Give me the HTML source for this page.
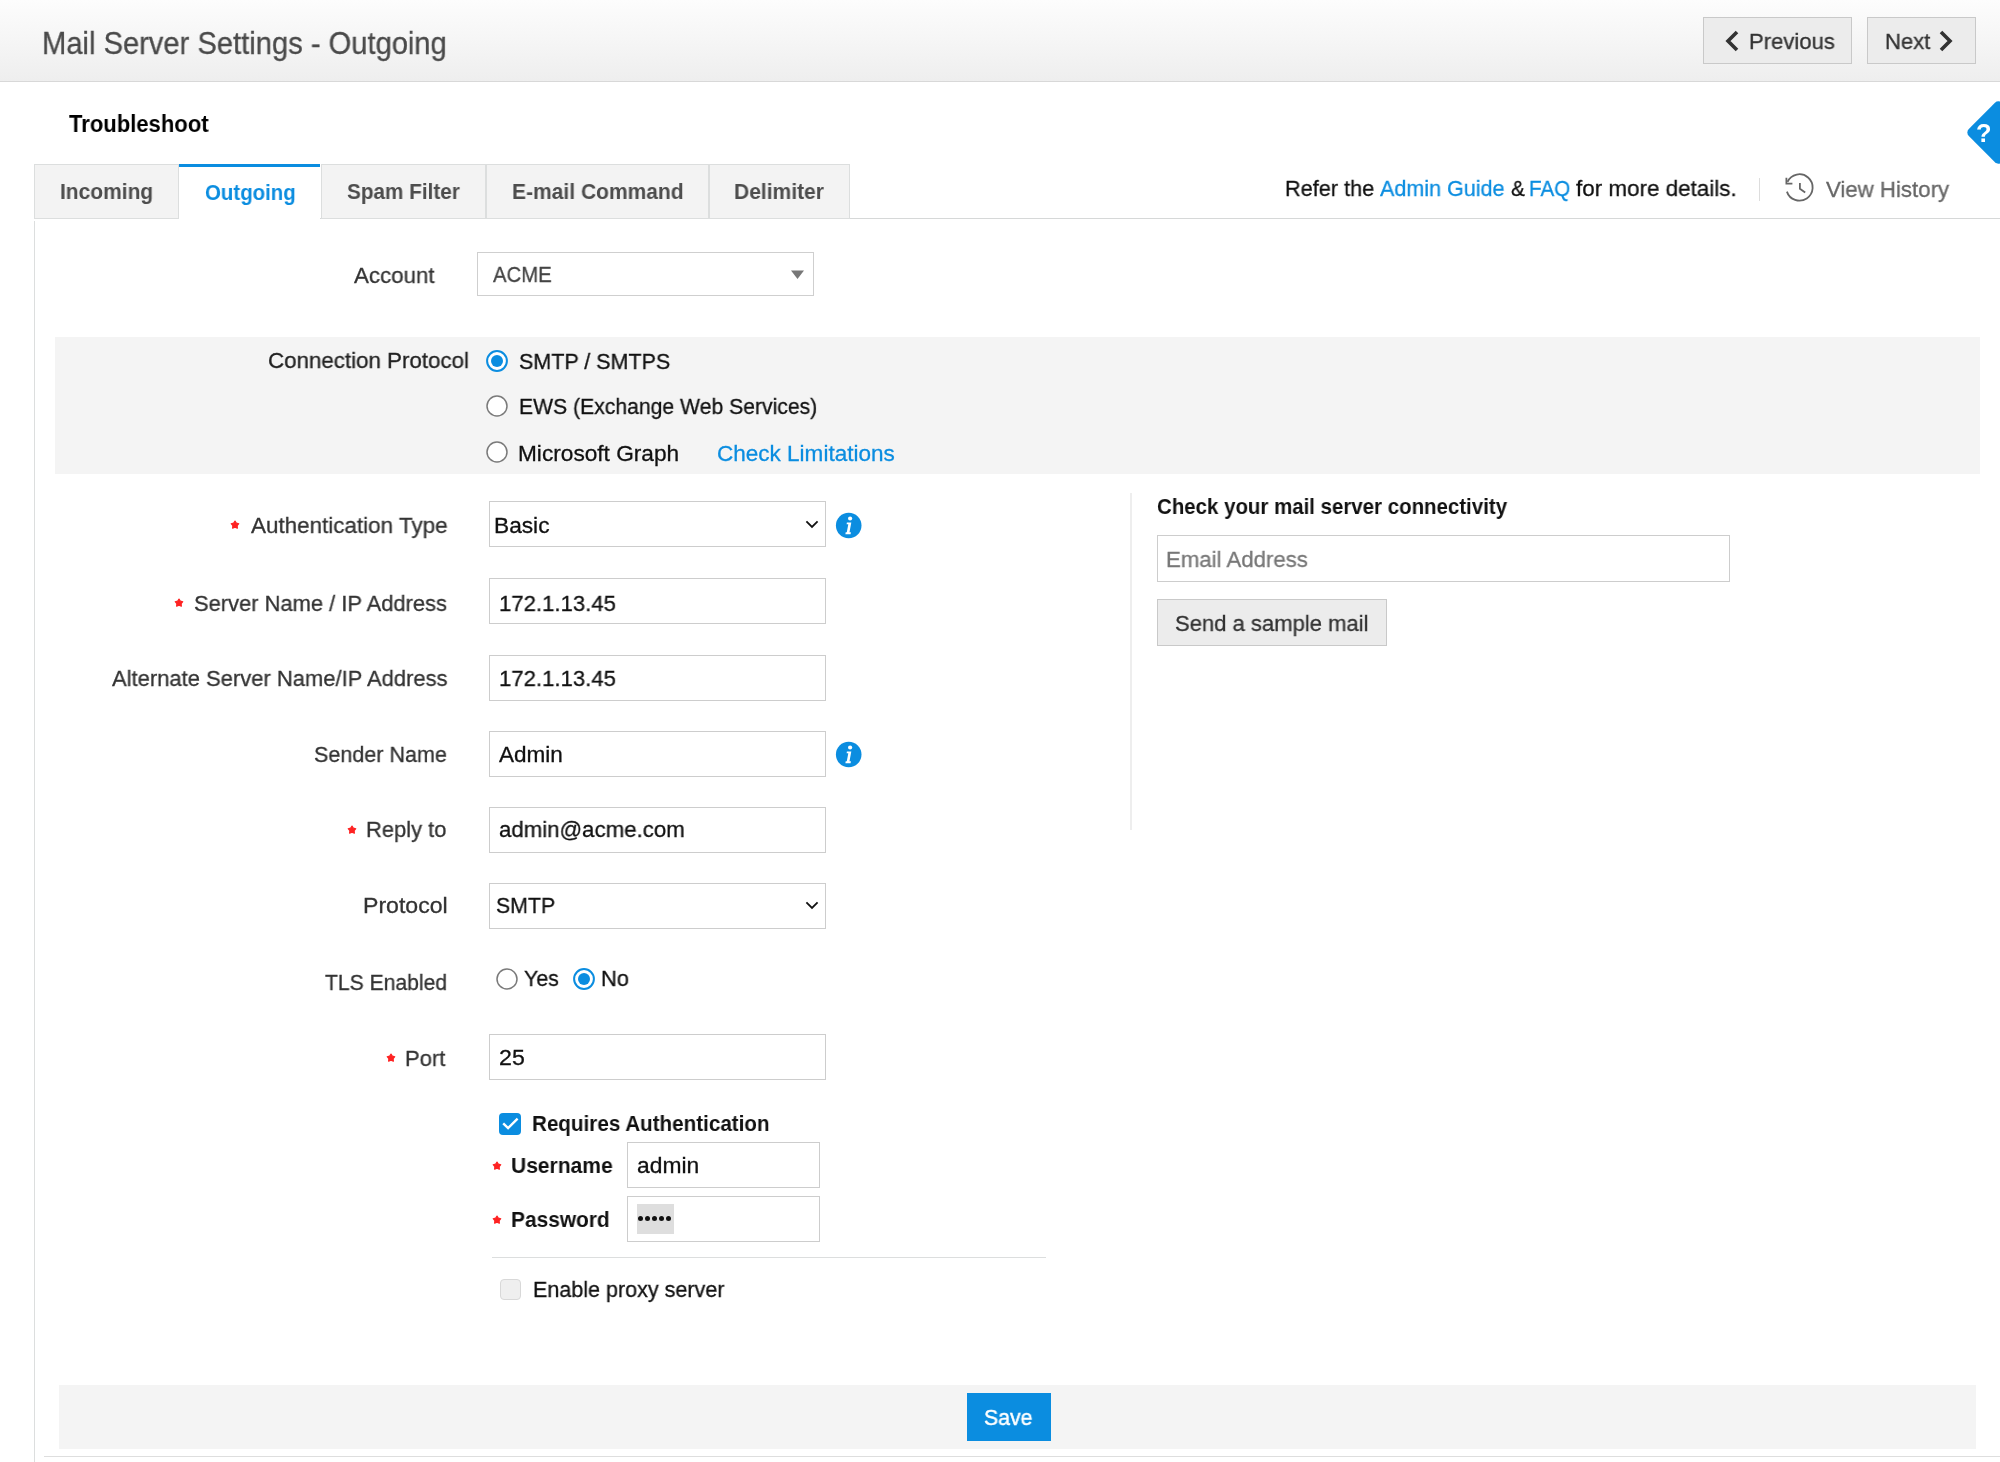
<!DOCTYPE html>
<html><head><meta charset="utf-8"><title>Mail Server Settings - Outgoing</title>
<style>
html,body{margin:0;padding:0;width:2000px;height:1462px;overflow:hidden;background:#fff}
body{position:relative;font-family:"Liberation Sans",sans-serif}
.s,.t{position:absolute;box-sizing:content-box}
.t{white-space:nowrap;transform-origin:0 0;will-change:transform}
.btn{background:#ececec;border:1px solid #c9c9c9}
.tab{background:#f3f3f3;border:1px solid #dcdede}
.inp{background:#fff;border:1px solid #cdcdcd}
</style></head>
<body>
<div class="s" style="left:0;top:0;width:2000px;height:81px;background:linear-gradient(#fdfdfd,#eeeeee);border-bottom:1px solid #d8d8d8"></div>
<div class="s btn" style="left:1703px;top:17px;width:147px;height:45px"></div>
<div class="s btn" style="left:1867px;top:17px;width:107px;height:45px"></div>
<svg class="s" style="left:1722px;top:28px" width="20" height="26" viewBox="0 0 20 26"><path d="M15 4 L6 13 L15 22" fill="none" stroke="#333" stroke-width="3.6"/></svg>
<svg class="s" style="left:1936px;top:28px" width="20" height="26" viewBox="0 0 20 26"><path d="M5 4 L14 13 L5 22" fill="none" stroke="#333" stroke-width="3.6"/></svg>
<div class="s" style="left:34px;top:218px;width:1966px;height:1px;background:#d6d8d8"></div>
<div class="s tab" style="left:34px;top:164px;width:143px;height:53px"></div>
<div class="s" style="left:179px;top:164px;width:141px;height:55px;background:#fff;border-top:3px solid #0b8de0;box-sizing:border-box"></div>
<div class="s tab" style="left:321px;top:164px;width:163px;height:53px"></div>
<div class="s tab" style="left:486px;top:164px;width:221px;height:53px"></div>
<div class="s tab" style="left:709px;top:164px;width:139px;height:53px"></div>
<div class="s" style="left:34px;top:221px;width:1px;height:1241px;background:#dcdede"></div>
<div class="s" style="left:1759px;top:178px;width:1px;height:23px;background:#ddd"></div>
<svg class="s" style="left:1782px;top:170px" width="36" height="36" viewBox="1782 170 36 36"><path d="M1787.5 181.8 A13.2 13.2 0 1 1 1786.9 191.6" fill="none" stroke="#666" stroke-width="1.8"/><path d="M1786.4 177.8 L1786.4 183.6 L1792.4 183.6" fill="none" stroke="#666" stroke-width="1.8"/><path d="M1799.9 183 L1799.9 188.7 L1805.2 192.4" fill="none" stroke="#666" stroke-width="1.8"/></svg>
<div class="s" style="left:1975px;top:109px;width:47px;height:47px;background:#0b8de0;border-radius:5px;transform:rotate(45deg)"></div>
<div class="s" style="left:477px;top:252px;width:335px;height:42px;border:1px solid #cfcfcf;background:#fff"></div>
<svg class="s" style="left:789px;top:268px" width="18" height="14" viewBox="0 0 18 14"><path d="M2 2.5 L15 2.5 L8.5 11 Z" fill="#777"/></svg>
<div class="s" style="left:55px;top:337px;width:1925px;height:137px;background:#f4f4f4"></div>
<svg class="s" style="left:484.7px;top:348.8px" width="24" height="24" viewBox="0 0 24 24"><circle cx="12" cy="12" r="9.9" fill="#fff" stroke="#0b8de0" stroke-width="2"/><circle cx="12" cy="12" r="6" fill="#0b8de0"/></svg>
<svg class="s" style="left:484.7px;top:394.3px" width="24" height="24" viewBox="0 0 24 24"><circle cx="12" cy="12" r="10" fill="#fff" stroke="#7a7a7a" stroke-width="1.5"/></svg>
<svg class="s" style="left:484.7px;top:439.8px" width="24" height="24" viewBox="0 0 24 24"><circle cx="12" cy="12" r="10" fill="#fff" stroke="#7a7a7a" stroke-width="1.5"/></svg>
<svg class="s" style="left:495px;top:966.7px" width="24" height="24" viewBox="0 0 24 24"><circle cx="12" cy="12" r="10" fill="#fff" stroke="#7a7a7a" stroke-width="1.5"/></svg>
<svg class="s" style="left:571.5px;top:966.7px" width="24" height="24" viewBox="0 0 24 24"><circle cx="12" cy="12" r="9.9" fill="#fff" stroke="#0b8de0" stroke-width="2"/><circle cx="12" cy="12" r="6" fill="#0b8de0"/></svg>
<div class="s inp" style="left:489px;top:501px;width:335px;height:44px"></div>
<div class="s inp" style="left:489px;top:578px;width:335px;height:44px"></div>
<div class="s inp" style="left:489px;top:655px;width:335px;height:44px"></div>
<div class="s inp" style="left:489px;top:731px;width:335px;height:44px"></div>
<div class="s inp" style="left:489px;top:807px;width:335px;height:44px"></div>
<div class="s inp" style="left:489px;top:883px;width:335px;height:44px"></div>
<div class="s inp" style="left:489px;top:1034px;width:335px;height:44px"></div>
<svg class="s" style="left:803px;top:517.4px" width="18" height="16" viewBox="0 0 18 16"><path d="M3.4 4.4 L9 9.9 L14.6 4.4" fill="none" stroke="#111" stroke-width="1.8"/></svg>
<svg class="s" style="left:803px;top:897.9px" width="18" height="16" viewBox="0 0 18 16"><path d="M3.4 4.4 L9 9.9 L14.6 4.4" fill="none" stroke="#111" stroke-width="1.8"/></svg>
<svg class="s" style="left:835px;top:511.90000000000003px" width="27" height="27" viewBox="0 0 27 27"><circle cx="13.7" cy="13.5" r="12.8" fill="#0b8de0"/><circle cx="15.1" cy="6.5" r="2.1" fill="#fff"/><path d="M11.9 10.5 L16.3 10.5 L14.5 20.3 L15.9 20.3 L15.6 22.2 L10.4 22.2 L10.7 20.3 L11.8 20.3 L13.3 12.3 L11.6 12.3 Z" fill="#fff"/></svg>
<svg class="s" style="left:835px;top:741.3px" width="27" height="27" viewBox="0 0 27 27"><circle cx="13.7" cy="13.5" r="12.8" fill="#0b8de0"/><circle cx="15.1" cy="6.5" r="2.1" fill="#fff"/><path d="M11.9 10.5 L16.3 10.5 L14.5 20.3 L15.9 20.3 L15.6 22.2 L10.4 22.2 L10.7 20.3 L11.8 20.3 L13.3 12.3 L11.6 12.3 Z" fill="#fff"/></svg>
<svg class="s" style="left:228.85px;top:519.3px" width="12" height="12" viewBox="-6 -6 12 12"><polygon points="0.00,-4.00 1.35,-1.86 3.80,-1.24 2.19,0.71 2.35,3.24 0.00,2.30 -2.35,3.24 -2.19,0.71 -3.80,-1.24 -1.35,-1.86" fill="#fe2222" stroke="#fe2222" stroke-width="1.1" stroke-linejoin="round"/></svg>
<svg class="s" style="left:173.3px;top:597.0px" width="12" height="12" viewBox="-6 -6 12 12"><polygon points="0.00,-4.00 1.35,-1.86 3.80,-1.24 2.19,0.71 2.35,3.24 0.00,2.30 -2.35,3.24 -2.19,0.71 -3.80,-1.24 -1.35,-1.86" fill="#fe2222" stroke="#fe2222" stroke-width="1.1" stroke-linejoin="round"/></svg>
<svg class="s" style="left:346.05px;top:824.4px" width="12" height="12" viewBox="-6 -6 12 12"><polygon points="0.00,-4.00 1.35,-1.86 3.80,-1.24 2.19,0.71 2.35,3.24 0.00,2.30 -2.35,3.24 -2.19,0.71 -3.80,-1.24 -1.35,-1.86" fill="#fe2222" stroke="#fe2222" stroke-width="1.1" stroke-linejoin="round"/></svg>
<svg class="s" style="left:384.5px;top:1052.45px" width="12" height="12" viewBox="-6 -6 12 12"><polygon points="0.00,-4.00 1.35,-1.86 3.80,-1.24 2.19,0.71 2.35,3.24 0.00,2.30 -2.35,3.24 -2.19,0.71 -3.80,-1.24 -1.35,-1.86" fill="#fe2222" stroke="#fe2222" stroke-width="1.1" stroke-linejoin="round"/></svg>
<svg class="s" style="left:490.9px;top:1159.8px" width="12" height="12" viewBox="-6 -6 12 12"><polygon points="0.00,-4.00 1.35,-1.86 3.80,-1.24 2.19,0.71 2.35,3.24 0.00,2.30 -2.35,3.24 -2.19,0.71 -3.80,-1.24 -1.35,-1.86" fill="#fe2222" stroke="#fe2222" stroke-width="1.1" stroke-linejoin="round"/></svg>
<svg class="s" style="left:490.9px;top:1213.8px" width="12" height="12" viewBox="-6 -6 12 12"><polygon points="0.00,-4.00 1.35,-1.86 3.80,-1.24 2.19,0.71 2.35,3.24 0.00,2.30 -2.35,3.24 -2.19,0.71 -3.80,-1.24 -1.35,-1.86" fill="#fe2222" stroke="#fe2222" stroke-width="1.1" stroke-linejoin="round"/></svg>
<svg class="s" style="left:498px;top:1112.3px" width="24" height="24" viewBox="0 0 24 24"><rect x="1" y="1" width="22" height="22" rx="4" fill="#0b8de0"/><path d="M5.2 11.3 L10.1 16.1 L19.6 6.6" fill="none" stroke="#fff" stroke-width="2.4"/></svg>
<div class="s inp" style="left:626.5px;top:1142px;width:191px;height:44px"></div>
<div class="s inp" style="left:626.5px;top:1196px;width:191px;height:44px"></div>
<div class="s" style="left:636.5px;top:1204px;width:37px;height:30px;background:#dedede"></div>
<div class="s" style="left:638.0px;top:1216.4px;width:5px;height:5px;border-radius:50%;background:#111"></div>
<div class="s" style="left:645.05px;top:1216.4px;width:5px;height:5px;border-radius:50%;background:#111"></div>
<div class="s" style="left:652.1px;top:1216.4px;width:5px;height:5px;border-radius:50%;background:#111"></div>
<div class="s" style="left:659.15px;top:1216.4px;width:5px;height:5px;border-radius:50%;background:#111"></div>
<div class="s" style="left:666.2px;top:1216.4px;width:5px;height:5px;border-radius:50%;background:#111"></div>
<div class="s" style="left:492px;top:1256.5px;width:554px;height:1.5px;background:#dcdede"></div>
<div class="s" style="left:499.5px;top:1279.3px;width:19px;height:19px;border:1px solid #d8d8d8;border-radius:4px;background:#efefef"></div>
<div class="s" style="left:1130px;top:493px;width:1.5px;height:337px;background:#eeeeee"></div>
<div class="s inp" style="left:1157px;top:535px;width:571px;height:44.5px"></div>
<div class="s btn" style="left:1157px;top:599px;width:228px;height:45px"></div>
<div class="s" style="left:59px;top:1384.5px;width:1917px;height:64.5px;background:#f4f4f4"></div>
<div class="s" style="left:966.7px;top:1393px;width:84.6px;height:47.6px;background:#0b8de0"></div>
<div class="s" style="left:44px;top:1456px;width:1956px;height:1px;background:#dedede"></div>
<div id="title" class="t" style="left:41.58px;top:28.07px;font-size:30.5px;line-height:30.5px;font-weight:normal;transform:scaleX(0.9552);color:#4a4a4a;-webkit-text-stroke:0.3px #4a4a4a">Mail Server Settings - Outgoing</div>
<div id="prev" class="t" style="left:1748.55px;top:30.67px;font-size:22.5px;line-height:22.5px;font-weight:normal;transform:scaleX(0.9814);color:#333;-webkit-text-stroke:0.3px #333">Previous</div>
<div id="next" class="t" style="left:1884.65px;top:30.67px;font-size:22.5px;line-height:22.5px;font-weight:normal;transform:scaleX(0.9800);color:#333;-webkit-text-stroke:0.3px #333">Next</div>
<div id="trb" class="t" style="left:68.53px;top:113.03px;font-size:23.5px;line-height:23.5px;font-weight:bold;transform:scaleX(0.9377);color:#000">Troubleshoot</div>
<div id="tab1" class="t" style="left:60.23px;top:180.80px;font-size:22px;line-height:22px;font-weight:bold;transform:scaleX(0.9529);color:#4d4d4d">Incoming</div>
<div id="tab2" class="t" style="left:204.62px;top:182.30px;font-size:22px;line-height:22px;font-weight:bold;transform:scaleX(0.9288);color:#0b8de0">Outgoing</div>
<div id="tab3" class="t" style="left:347.47px;top:180.80px;font-size:22px;line-height:22px;font-weight:bold;transform:scaleX(0.9420);color:#4d4d4d">Spam Filter</div>
<div id="tab4" class="t" style="left:512.00px;top:181.30px;font-size:22px;line-height:22px;font-weight:bold;transform:scaleX(0.9552);color:#4d4d4d">E-mail Command</div>
<div id="tab5" class="t" style="left:734.29px;top:181.30px;font-size:22px;line-height:22px;font-weight:bold;transform:scaleX(0.9559);color:#4d4d4d">Delimiter</div>
<div id="ref1" class="t" style="left:1285.03px;top:178.07px;font-size:22.5px;line-height:22.5px;font-weight:normal;transform:scaleX(0.9642);color:#111;-webkit-text-stroke:0.3px #111">Refer the</div>
<div id="ref2" class="t" style="left:1380.14px;top:178.07px;font-size:22.5px;line-height:22.5px;font-weight:normal;transform:scaleX(0.9575);color:#0b8de0;-webkit-text-stroke:0.3px #0b8de0">Admin Guide</div>
<div id="ref3" class="t" style="left:1510.65px;top:178.07px;font-size:22.5px;line-height:22.5px;font-weight:normal;transform:scaleX(0.9219);color:#111;-webkit-text-stroke:0.3px #111">&amp;</div>
<div id="ref4" class="t" style="left:1529.18px;top:178.07px;font-size:22.5px;line-height:22.5px;font-weight:normal;transform:scaleX(0.9164);color:#0b8de0;-webkit-text-stroke:0.3px #0b8de0">FAQ</div>
<div id="ref5" class="t" style="left:1575.87px;top:178.07px;font-size:22.5px;line-height:22.5px;font-weight:normal;transform:scaleX(0.9963);color:#111;-webkit-text-stroke:0.3px #111">for more details.</div>
<div id="vh" class="t" style="left:1826.04px;top:179.38px;font-size:22.5px;line-height:22.5px;font-weight:normal;transform:scaleX(0.9883);color:#666;-webkit-text-stroke:0.3px #666">View History</div>
<div id="acc" class="t" style="left:353.75px;top:265.38px;font-size:22.5px;line-height:22.5px;font-weight:normal;transform:scaleX(0.9914);color:#333;-webkit-text-stroke:0.3px #333">Account</div>
<div id="acme" class="t" style="left:492.70px;top:264.18px;font-size:22.5px;line-height:22.5px;font-weight:normal;transform:scaleX(0.9029);color:#444;-webkit-text-stroke:0.3px #444">ACME</div>
<div id="cp" class="t" style="left:267.73px;top:350.07px;font-size:22.5px;line-height:22.5px;font-weight:normal;transform:scaleX(0.9923);color:#222;-webkit-text-stroke:0.3px #222">Connection Protocol</div>
<div id="r1" class="t" style="left:519.20px;top:351.48px;font-size:22.5px;line-height:22.5px;font-weight:normal;transform:scaleX(0.9559);color:#111;-webkit-text-stroke:0.3px #111">SMTP / SMTPS</div>
<div id="r2" class="t" style="left:518.85px;top:396.18px;font-size:22.5px;line-height:22.5px;font-weight:normal;transform:scaleX(0.9401);color:#111;-webkit-text-stroke:0.3px #111">EWS (Exchange Web Services)</div>
<div id="r3" class="t" style="left:518.48px;top:443.48px;font-size:22.5px;line-height:22.5px;font-weight:normal;transform:scaleX(1.0070);color:#111;-webkit-text-stroke:0.3px #111">Microsoft Graph</div>
<div id="chk" class="t" style="left:717.09px;top:443.48px;font-size:22.5px;line-height:22.5px;font-weight:normal;transform:scaleX(1.0009);color:#0b8de0;-webkit-text-stroke:0.3px #0b8de0">Check Limitations</div>
<div id="l1" class="t" style="left:250.56px;top:514.67px;font-size:22.5px;line-height:22.5px;font-weight:normal;transform:scaleX(0.9966);color:#333;-webkit-text-stroke:0.3px #333">Authentication Type</div>
<div id="l2" class="t" style="left:193.79px;top:593.38px;font-size:22.5px;line-height:22.5px;font-weight:normal;transform:scaleX(0.9739);color:#333;-webkit-text-stroke:0.3px #333">Server Name / IP Address</div>
<div id="l3" class="t" style="left:111.50px;top:668.08px;font-size:22.5px;line-height:22.5px;font-weight:normal;transform:scaleX(0.9769);color:#333;-webkit-text-stroke:0.3px #333">Alternate Server Name/IP Address</div>
<div id="l4" class="t" style="left:313.94px;top:743.58px;font-size:22.5px;line-height:22.5px;font-weight:normal;transform:scaleX(0.9578);color:#333;-webkit-text-stroke:0.3px #333">Sender Name</div>
<div id="l5" class="t" style="left:366.01px;top:819.17px;font-size:22.5px;line-height:22.5px;font-weight:normal;transform:scaleX(0.9747);color:#333;-webkit-text-stroke:0.3px #333">Reply to</div>
<div id="l6" class="t" style="left:363.23px;top:895.17px;font-size:22.5px;line-height:22.5px;font-weight:normal;transform:scaleX(1.0268);color:#333;-webkit-text-stroke:0.3px #333">Protocol</div>
<div id="l7" class="t" style="left:325.07px;top:971.88px;font-size:22.5px;line-height:22.5px;font-weight:normal;transform:scaleX(0.9388);color:#333;-webkit-text-stroke:0.3px #333">TLS Enabled</div>
<div id="l8" class="t" style="left:405.04px;top:1047.88px;font-size:22.5px;line-height:22.5px;font-weight:normal;transform:scaleX(0.9792);color:#333;-webkit-text-stroke:0.3px #333">Port</div>
<div id="v1" class="t" style="left:494.44px;top:514.67px;font-size:22.5px;line-height:22.5px;font-weight:normal;transform:scaleX(1.0090);color:#111;-webkit-text-stroke:0.3px #111">Basic</div>
<div id="v2" class="t" style="left:498.98px;top:593.38px;font-size:22.5px;line-height:22.5px;font-weight:normal;transform:scaleX(0.9846);color:#111;-webkit-text-stroke:0.3px #111">172.1.13.45</div>
<div id="v3" class="t" style="left:498.98px;top:668.08px;font-size:22.5px;line-height:22.5px;font-weight:normal;transform:scaleX(0.9846);color:#111;-webkit-text-stroke:0.3px #111">172.1.13.45</div>
<div id="v4" class="t" style="left:498.77px;top:743.58px;font-size:22.5px;line-height:22.5px;font-weight:normal;transform:scaleX(1.0013);color:#111;-webkit-text-stroke:0.3px #111">Admin</div>
<div id="v5" class="t" style="left:498.94px;top:819.17px;font-size:22.5px;line-height:22.5px;font-weight:normal;transform:scaleX(0.9880);color:#111;-webkit-text-stroke:0.3px #111">admin@acme.com</div>
<div id="v6" class="t" style="left:495.65px;top:895.17px;font-size:22.5px;line-height:22.5px;font-weight:normal;transform:scaleX(0.9470);color:#111;-webkit-text-stroke:0.3px #111">SMTP</div>
<div id="v8" class="t" style="left:498.54px;top:1046.88px;font-size:22.5px;line-height:22.5px;font-weight:normal;transform:scaleX(1.0293);color:#111;-webkit-text-stroke:0.3px #111">25</div>
<div id="yes" class="t" style="left:524.19px;top:968.27px;font-size:22.5px;line-height:22.5px;font-weight:normal;transform:scaleX(0.9482);color:#111;-webkit-text-stroke:0.3px #111">Yes</div>
<div id="no" class="t" style="left:601.18px;top:968.27px;font-size:22.5px;line-height:22.5px;font-weight:normal;transform:scaleX(0.9723);color:#111;-webkit-text-stroke:0.3px #111">No</div>
<div id="ra" class="t" style="left:532.29px;top:1112.90px;font-size:22px;line-height:22px;font-weight:bold;transform:scaleX(0.9373);color:#111">Requires Authentication</div>
<div id="un" class="t" style="left:510.87px;top:1154.70px;font-size:22px;line-height:22px;font-weight:bold;transform:scaleX(0.9559);color:#111">Username</div>
<div id="unv" class="t" style="left:636.88px;top:1155.28px;font-size:22.5px;line-height:22.5px;font-weight:normal;transform:scaleX(1.0150);color:#111;-webkit-text-stroke:0.3px #111">admin</div>
<div id="pw" class="t" style="left:510.80px;top:1208.60px;font-size:22px;line-height:22px;font-weight:bold;transform:scaleX(0.9489);color:#111">Password</div>
<div id="eps" class="t" style="left:533.24px;top:1279.28px;font-size:22.5px;line-height:22.5px;font-weight:normal;transform:scaleX(0.9573);color:#111;-webkit-text-stroke:0.3px #111">Enable proxy server</div>
<div id="ckh" class="t" style="left:1156.71px;top:496.30px;font-size:22px;line-height:22px;font-weight:bold;transform:scaleX(0.9294);color:#111">Check your mail server connectivity</div>
<div id="ema" class="t" style="left:1166.07px;top:548.88px;font-size:22.5px;line-height:22.5px;font-weight:normal;transform:scaleX(0.9872);color:#777;-webkit-text-stroke:0.3px #777">Email Address</div>
<div id="send" class="t" style="left:1175.14px;top:612.88px;font-size:22.5px;line-height:22.5px;font-weight:normal;transform:scaleX(0.9797);color:#333;-webkit-text-stroke:0.3px #333">Send a sample mail</div>
<div id="help" class="t" style="left:1976.29px;top:121.05px;font-size:25px;line-height:25px;font-weight:bold;transform:scaleX(1.0155);color:#fff">?</div>
<div id="save" class="t" style="left:984.33px;top:1407.30px;font-size:22px;line-height:22px;font-weight:normal;transform:scaleX(0.9634);color:#fff;-webkit-text-stroke:0.45px #fff">Save</div>
</body></html>
